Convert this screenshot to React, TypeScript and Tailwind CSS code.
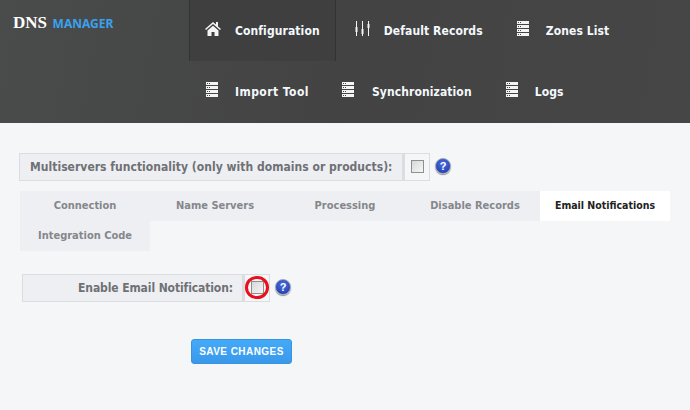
import { ReactNode } from "react";

const ServerIcon = () => (
  <svg width="12" height="15" viewBox="0 0 12 15" className="block shrink-0">
    <rect width="12" height="3" y="0" fill="#f4f4f4" />
    <rect width="12" height="3" y="4" fill="#f4f4f4" />
    <rect width="12" height="3" y="8" fill="#f4f4f4" />
    <rect width="12" height="3" y="12" fill="#f4f4f4" />
    <path d="M1 1.5h4M1 5.5h4M1 9.5h4M1 13.5h4" stroke="#444" strokeWidth="1" strokeDasharray="1 1" />
  </svg>
);

const HomeIcon = () => (
  <svg width="16" height="15" viewBox="0 0 16 15" className="block shrink-0">
    <path d="M8 1 0 8l1 1 7-6 7 6 1-1-3-2.6V1h-2v2.6z" fill="#f4f4f4" />
    <path d="M2.5 9.5 8 4.7l5.5 4.8V15H9.5v-4h-3v4h-4z" fill="#f4f4f4" />
  </svg>
);

const SlidersIcon = () => (
  <svg width="15" height="15" viewBox="0 0 15 15" className="block shrink-0">
    <path d="M1.5 0v15M7.5 0v15M13.5 0v15" stroke="#f4f4f4" strokeWidth="1" />
    <rect x="0.5" y="6" width="2" height="5" fill="#f4f4f4" />
    <rect x="6.5" y="8" width="2" height="5" fill="#f4f4f4" />
    <rect x="12.5" y="3" width="2" height="4" fill="#f4f4f4" />
  </svg>
);

const HelpIcon = () => (
  <span className="block w-4 h-4 -mt-[2px] rounded-full border border-[#9aa3b8] bg-[radial-gradient(circle_at_50%_35%,#4c6fe0,#1c35a8)] text-white text-[11px] leading-[14px] font-bold text-center font-['Liberation_Sans',sans-serif] shadow-[0_1px_1px_#8a8a8a]">
    ?
  </span>
);

const Checkbox = () => (
  <span className="block w-[13px] h-[13px] -mt-px ml-px border border-[#8e8f8f] bg-[linear-gradient(135deg,#d8d8d8,#f6f6f6)]" />
);

type NavItemProps = {
  icon: ReactNode;
  label: string;
  className: string;
  iconClass: string;
  labelClass?: string;
};

const NavItem = ({ icon, label, className, iconClass, labelClass }: NavItemProps) => (
  <a className={`h-[61px] flex items-center text-[12px] tracking-[0.1px] font-bold text-[#f4f8fc] whitespace-nowrap ${className}`}>
    <span className={`-mt-1 ${iconClass}`}>{icon}</span>
    <span className={labelClass}>{label}</span>
  </a>
);

const tabs = ["Connection", "Name Servers", "Processing", "Disable Records", "Email Notifications", "Integration Code"];

export default function App() {
  return (
    <div className="w-[690px] h-[410px] overflow-hidden bg-[#f5f6f8] font-['DejaVu_Sans_Condensed','DejaVu_Sans',sans-serif]">
      <header className="h-[123px] flex bg-[linear-gradient(100deg,#4a4c4b,#424342_50%,#454645)]">
        <div className="w-[189px] pl-[13px] pt-[11px] leading-[24px] shrink-0 whitespace-nowrap">
          <span className="text-[17px] font-bold text-white font-['Liberation_Serif',serif]">DNS</span>{" "}
          <span className="text-[12px] font-bold text-[#3aa1ef] font-['Noto_Sans',sans-serif] ml-px">MANAGER</span>
        </div>
        <nav className="flex-1">
          <div className="flex">
            <NavItem
              icon={<HomeIcon />}
              label="Configuration"
              className="bg-[#3e3f3e] border-x border-[#333] pl-[15px] pr-[15px]"
              iconClass="w-[30px]"
            />
            <NavItem icon={<SlidersIcon />} label="Default Records" className="pl-[19px] pr-[16px]" iconClass="w-[29px]" />
            <NavItem icon={<ServerIcon />} label="Zones List" className="pl-[18px] pr-[17px]" iconClass="w-[29px]" />
          </div>
          <div className="flex">
            <NavItem
              icon={<ServerIcon />}
              label="Import Tool"
              className="pl-[17px] pr-[14px]"
              iconClass="w-[29px]"
              labelClass="tracking-[0.45px]"
            />
            <NavItem icon={<ServerIcon />} label="Synchronization" className="pl-[19px] pr-[16px]" iconClass="w-[30px]" />
            <NavItem icon={<ServerIcon />} label="Logs" className="pl-[18px] pr-[17px]" iconClass="w-[29px]" />
          </div>
        </nav>
      </header>

      <main className="pt-[30px]">
        <div className="flex items-center ml-[19px]">
          <div className="flex h-7 border border-[#dcdde1]">
            <label className="w-[385px] pl-[10px] flex items-center bg-[#eeeff3] border-r-[3px] border-[#dcdde1] text-[12px] tracking-[0.03px] font-bold text-[#6f7175] whitespace-nowrap">
              Multiservers functionality (only with domains or products):
            </label>
            <div className="w-[24px] flex items-center justify-center">
              <Checkbox />
            </div>
          </div>
          <div className="ml-[5px]">
            <HelpIcon />
          </div>
        </div>

        <div className="mt-[10px] ml-5 w-[650px] flex flex-wrap">
          {tabs.map((t) => (
            <div
              key={t}
              className={`w-[130px] h-[30px] flex items-center justify-center font-bold ${
                t === "Email Notifications" ? "bg-white text-[#222] text-[10.5px]" : "bg-[#eeeff3] text-[#85878b] text-[11px]"
              }`}
            >
              {t}
            </div>
          ))}
        </div>

        <div className="flex items-center ml-[22px] mt-[23px]">
          <div className="flex h-7 w-[248px] border border-[#dcdde1]">
            <label className="flex-1 pr-[9px] flex items-center justify-end bg-[#eeeff3] border-r-[3px] border-[#dcdde1] text-[12px] tracking-[-0.1px] font-bold text-[#6f7175] whitespace-nowrap">
              Enable Email Notification:
            </label>
            <div className="relative w-[24px] flex items-center justify-center">
              <Checkbox />
              <span className="absolute left-0 top-px w-6 h-[23px] rounded-full border-[3px] border-[#e8101c]" />
            </div>
          </div>
          <div className="ml-[5px]">
            <HelpIcon />
          </div>
        </div>

        <button className="block ml-[191px] mt-[37px] w-[101px] h-[25px] rounded-[3px] border border-[#3a94dd] bg-[linear-gradient(#42aaf8,#3a98ea)] text-white text-[10px] font-bold tracking-[0.45px] font-['Liberation_Sans',sans-serif]">
          SAVE CHANGES
        </button>
      </main>
    </div>
  );
}
